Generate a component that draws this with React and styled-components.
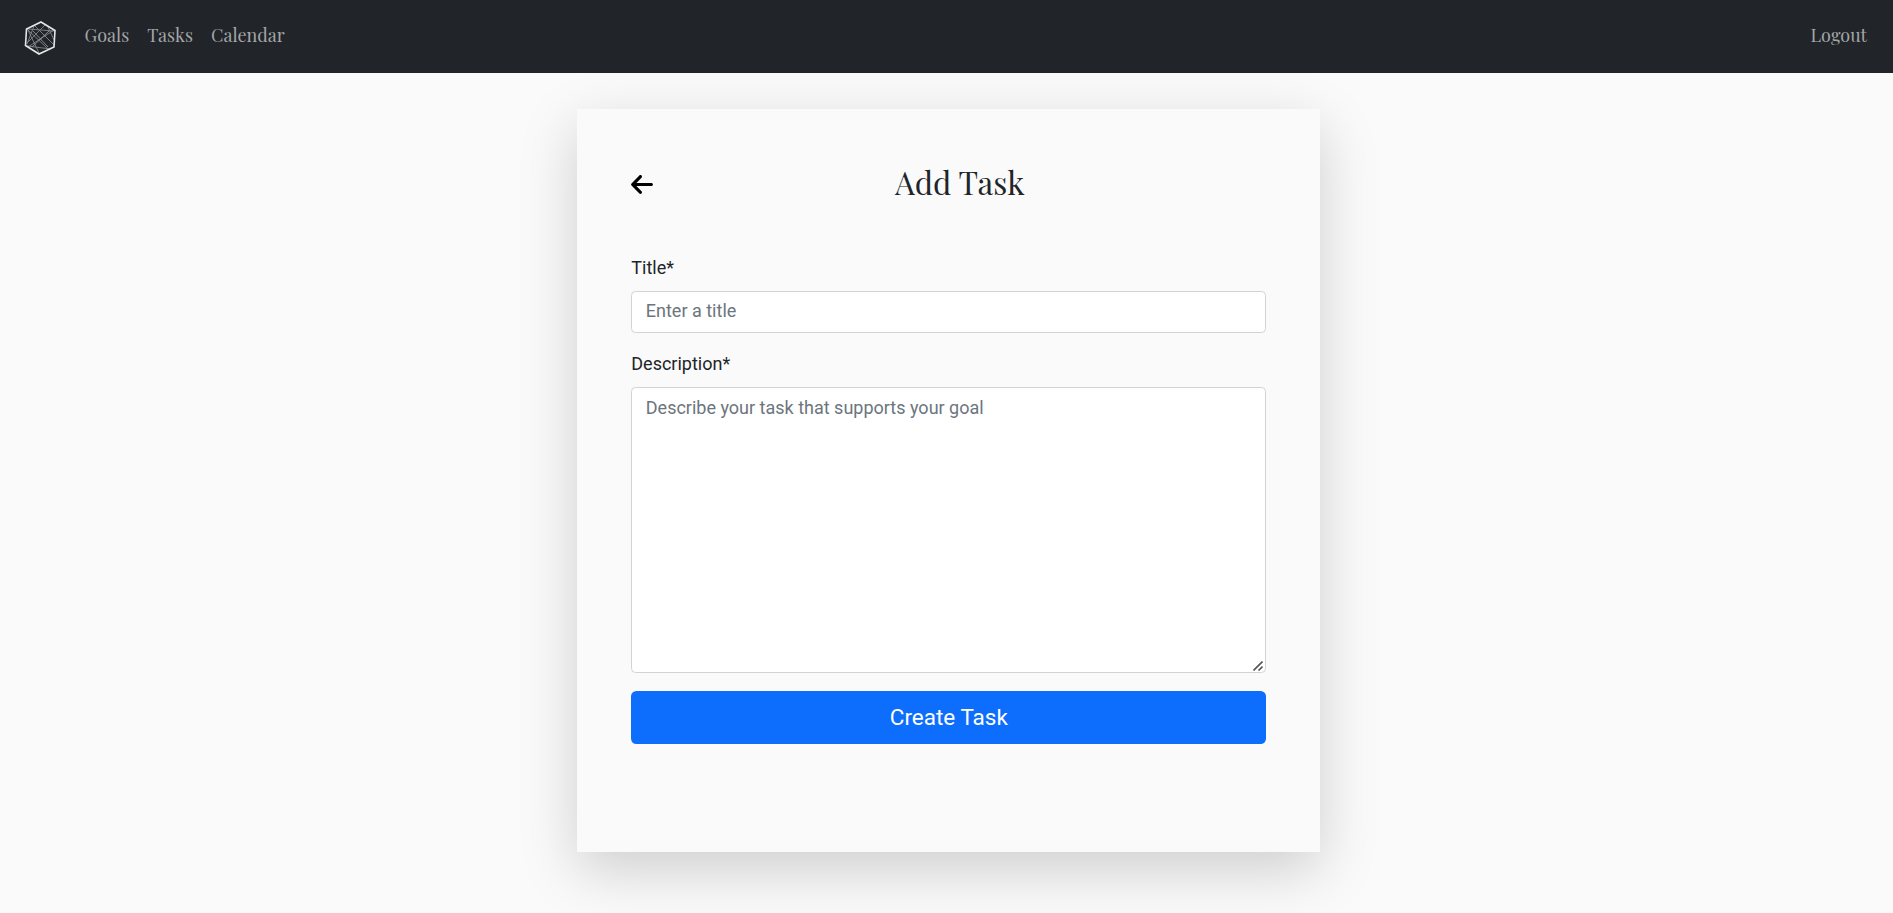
import React from "react";
import styled, { createGlobalStyle } from "styled-components";
import { FaArrowLeft } from "react-icons/fa6";

const GlobalStyle = createGlobalStyle`
  *, *::before, *::after { box-sizing: border-box; }
  html { font-size: 18px; }
  body {
    margin: 0;
    min-height: 100vh;
    background: #fafafa;
    color: #212529;
    font-family: Roboto, sans-serif;
    font-size: 1rem;
    line-height: 1.5;
  }
`;

const Page = styled.div`
  height: 913px;
`;

const Navbar = styled.nav`
  display: flex;
  align-items: center;
  height: 73px;
  padding: 0 26px 0 24px;
  background: #212529;
`;

const Brand = styled.a`
  display: flex;
  margin: 2px 27.5px 0 0;
`;

const NavList = styled.div`
  display: flex;
  flex: 1;
  gap: 18px;
`;

const NavLink = styled.a`
  margin-top: -2px;
  color: #a4a6a8;
  font-family: "Playfair Display", "Liberation Serif", serif;
  font-size: 18px;
  line-height: 27px;
  white-space: nowrap;
  text-decoration: none;
`;

const Card = styled.main`
  display: flex;
  flex-direction: column;
  width: 743px;
  height: 743px;
  margin: 36px 0 0 577.3px;
  padding: 54px;
  background: #fafafa;
  box-shadow: 0 1rem 3rem rgba(0, 0, 0, 0.175);
`;

const CardHeader = styled.header`
  display: flex;
  align-items: center;
  height: 43px;
  margin-bottom: 48px;
`;

const BackLink = styled.a`
  display: flex;
  color: #000;

  svg { width: 22px; height: 25px; }
`;

const Heading = styled.h1`
  flex: 1;
  margin: -5px 0 0;
  font-family: "Playfair Display", "Liberation Serif", serif;
  font-size: 31.5px;
  font-weight: 400;
  line-height: 43px;
  text-align: center;
`;

const Label = styled.label`
  height: 27px;
  margin-bottom: 10px;
`;

const Input = styled.input`
  height: 42px;
  margin: 0 0 17px;
  padding: 5px 13.5px 8px;
  border: 1px solid #ced4da;
  border-radius: 4.5px;
  background: #fff;
  font: inherit;
  outline: none;

  &::placeholder { color: #6c757d; opacity: 1; }
`;

const TextAreaWrap = styled.div`
  position: relative;
  display: flex;
  height: 286px;
  margin-bottom: 18px;
`;

const TextArea = styled(Input).attrs({ as: "textarea" })`
  flex: 1;
  height: 100%;
  margin: 0;
  padding-top: 6px;
  resize: none;
`;

const Grip = styled.svg`
  position: absolute;
  right: 3px;
  bottom: 2px;
  pointer-events: none;
`;

const SubmitButton = styled.button`
  height: 53px;
  padding: 0 18px 1px;
  border: 0;
  border-radius: 5.4px;
  background: #0d6efd;
  color: #fff;
  font: 400 22.5px/34px Roboto, sans-serif;
`;

const Logo = () => (
  <svg width="33" height="36" viewBox="0 0 33 36" fill="none">
    <path
      d="M3 9 24 29M11 6 30 25M30 10 4 27M21 5 3 23M4 10 15 33M10 6 3 24M24 7 30 20M4 9 30 11M3 26 27 29"
      stroke="#85888a"
      strokeWidth=".9"
    />
    <path d="M9 11 24 27M25 11 8 27" stroke="#a2a4a6" strokeWidth=".8" />
    <path d="M17 2 31 10.5 30 27 15 34 1.5 25.5 2.5 9Z" stroke="#e5e6e6" strokeWidth="1.6" />
  </svg>
);

export default function App() {
  return (
    <Page>
      <GlobalStyle />
      <Navbar>
        <Brand href="#" aria-label="Home"><Logo /></Brand>
        <NavList>
          <NavLink href="#">Goals</NavLink>
          <NavLink href="#">Tasks</NavLink>
          <NavLink href="#">Calendar</NavLink>
        </NavList>
        <NavLink href="#">Logout</NavLink>
      </Navbar>
      <Card>
        <CardHeader>
          <BackLink href="#" aria-label="Back"><FaArrowLeft /></BackLink>
          <Heading>Add Task</Heading>
        </CardHeader>
        <Label htmlFor="title">Title*</Label>
        <Input id="title" placeholder="Enter a title" />
        <Label htmlFor="description">Description*</Label>
        <TextAreaWrap>
          <TextArea id="description" placeholder="Describe your task that supports your goal" />
          <Grip width="10" height="10" viewBox="0 0 10 10" fill="none">
            <path d="M.5 9.5 9.5 .5M5.5 9.5 9.5 5.5" stroke="#555" strokeWidth="1.6" />
          </Grip>
        </TextAreaWrap>
        <SubmitButton type="button">Create Task</SubmitButton>
      </Card>
    </Page>
  );
}
